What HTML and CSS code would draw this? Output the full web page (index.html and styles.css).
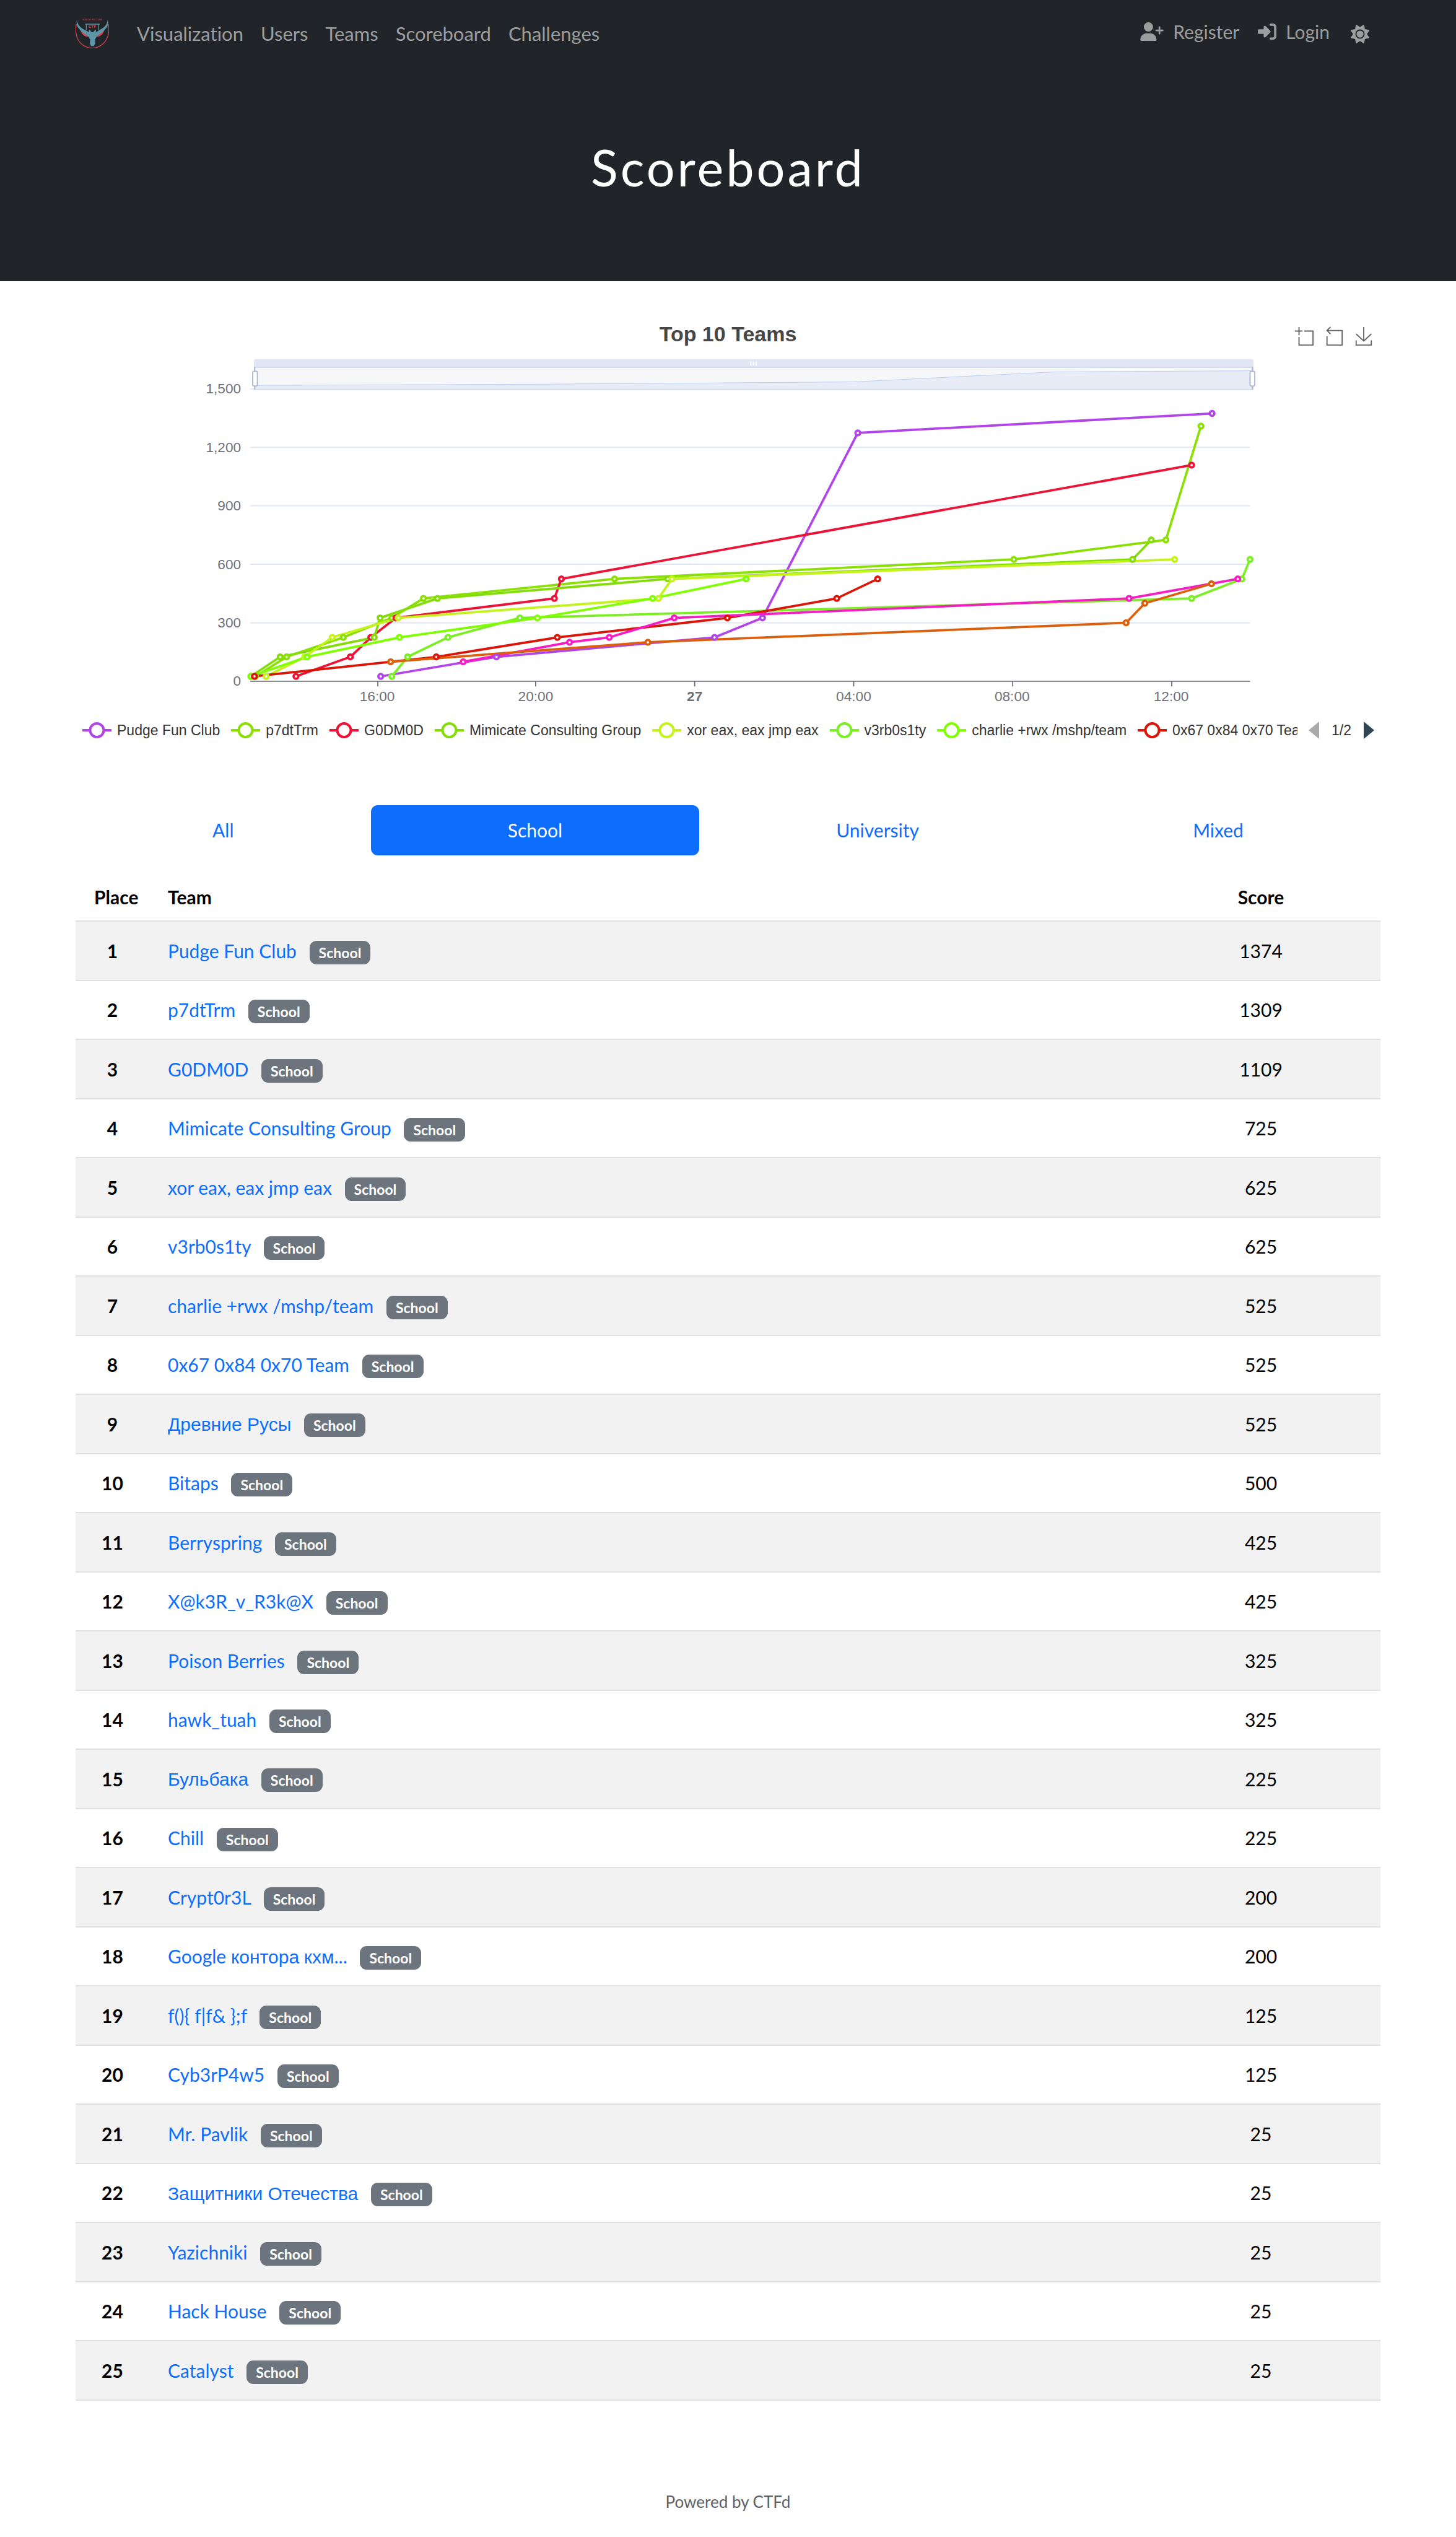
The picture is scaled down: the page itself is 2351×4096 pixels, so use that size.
FILE: index.html
```html
<!DOCTYPE html>
<html lang="en">
<head>
<meta charset="utf-8">
<meta name="viewport" content="width=device-width, initial-scale=1">
<title>Scoreboard</title>
<link rel="stylesheet" href="styles.css">
</head>
<body>
<header class="hero">
  <nav class="navbar container">
    <a class="brand" href="#" aria-label="Home">
      <svg viewBox="27 40 171 151" fill="none">
        <path d="M31 68C24 98 28 142 56 168C90 199 136 197 168 168C197 140 202 98 194 68" stroke="#cf4450" stroke-width="4"/>
        <path d="M48 88L84 112L104 132H86C68 132 54 112 48 88ZM178 88L142 112L124 132H140C158 132 172 112 178 88Z" fill="#d9444f"/>
        <path d="M34 44C34 62 46 80 62 90L96 110L104 122L95 108V97H100L106 106L113 110L120 106L127 97H131V108L124 122L132 108L166 88C182 78 190 62 191 44C196 64 192 78 184 88C172 104 150 118 134 132L126 146L128 166L120 180H106L100 166L102 146L92 132C74 118 54 104 42 88C34 78 30 64 34 44Z" fill="#5b97a9"/>
        <path d="M82 98V68M144 98V68M76 68H150" stroke="#5b97a9" stroke-width="4"/>
        <text x="112" y="88" class="logo-ctf">CTF</text>
        <text x="112" y="49" class="logo-cup">КУБОК РОССИИ</text>
      </svg>
    </a>
    <ul class="nav-links nav-pages">
      <li><a href="#">Visualization</a></li>
      <li><a href="#">Users</a></li>
      <li><a href="#">Teams</a></li>
      <li><a href="#">Scoreboard</a></li>
      <li><a href="#">Challenges</a></li>
    </ul>
    <ul class="nav-links nav-account">
      <li><a href="#"><svg class="icon icon-wide" viewBox="0 0 640 512"><path d="M96 128a128 128 0 1 1 256 0A128 128 0 1 1 96 128zM0 482.3C0 383.8 79.8 304 178.3 304l91.4 0C368.2 304 448 383.8 448 482.3c0 16.4-13.3 29.7-29.7 29.7L29.7 512C13.3 512 0 498.7 0 482.3zM504 312l0-64-64 0c-13.3 0-24-10.7-24-24s10.7-24 24-24l64 0 0-64c0-13.3 10.7-24 24-24s24 10.7 24 24l0 64 64 0c13.3 0 24 10.7 24 24s-10.7 24-24 24l-64 0 0 64c0 13.3-10.7 24-24 24s-24-10.7-24-24z"/></svg>Register</a></li>
      <li><a href="#"><svg class="icon" viewBox="0 0 512 512"><path d="M217.9 105.9L340.7 228.7c7.2 7.2 11.3 17.1 11.3 27.3s-4.1 20.1-11.3 27.3L217.9 406.1c-6.4 6.4-15 9.9-24 9.9c-18.7 0-33.9-15.2-33.9-33.9l0-62.1L32 320c-17.7 0-32-14.3-32-32l0-64c0-17.7 14.3-32 32-32l128 0 0-62.1c0-18.7 15.2-33.9 33.9-33.9c9 0 17.6 3.6 24 9.9zM352 416l64 0c17.7 0 32-14.3 32-32l0-256c0-17.7-14.3-32-32-32l-64 0c-17.7 0-32-14.3-32-32s14.3-32 32-32l64 0c53 0 96 43 96 96l0 256c0 53-43 96-96 96l-64 0c-17.7 0-32-14.3-32-32s14.3-32 32-32z"/></svg>Login</a></li>
      <li><button class="theme-switch" type="button" aria-label="Toggle theme"><svg class="icon" viewBox="0 0 512 512"><path d="M361.5 1.2c5 2.1 8.6 6.6 9.6 11.9L391 121l107.9 19.8c5.3 1 9.8 4.6 11.9 9.6s1.5 10.7-1.6 15.2L446.9 256l62.3 90.3c3.1 4.5 3.7 10.2 1.6 15.2s-6.6 8.6-11.9 9.6L391 391 371.1 498.9c-1 5.3-4.6 9.8-9.6 11.9s-10.7 1.5-15.2-1.6L256 446.9l-90.3 62.3c-4.5 3.1-10.2 3.7-15.2 1.6s-8.6-6.6-9.6-11.9L121 391 13.1 371.1c-5.3-1-9.8-4.6-11.9-9.6s-1.5-10.7 1.6-15.2L65.1 256 2.8 165.7c-3.1-4.5-3.7-10.2-1.6-15.2s6.6-8.6 11.9-9.6L121 121 140.9 13.1c1-5.3 4.6-9.8 9.6-11.9s10.7-1.5 15.2 1.6L256 65.1 346.3 2.8c4.5-3.1 10.2-3.7 15.2-1.6zM160 256a96 96 0 1 1 192 0 96 96 0 1 1 -192 0zm224 0a128 128 0 1 0 -256 0 128 128 0 1 0 256 0z"/></svg></button></li>
    </ul>
  </nav>
  <h1>Scoreboard</h1>
</header>

<main class="container">
  <section class="chart">
    <div class="chart-head">
      <h2>Top 10 Teams</h2>
      <div class="toolbox">
        <button type="button" aria-label="Zoom"><svg viewBox="0 0 34 34"><path d="M1 8H14M8 1V15M17 8H32V32H8V18"/></svg></button>
        <button type="button" aria-label="Zoom reset"><svg viewBox="0 0 34 34"><path d="M11 1L5 7L11 13M5 7H31V32H5V17"/></svg></button>
        <button type="button" aria-label="Save as image"><svg viewBox="0 0 34 34"><path d="M17 1V25M4 13L17 25L30 13M4 24V32H30V24"/></svg></button>
      </div>
    </div>

    <svg class="plot" viewBox="129 609 2232 604" role="img" aria-label="Scores of the top 10 teams over time">
      <g class="grid">
        <path d="M428 665H2138M428 765H2138M428 865H2138M428 965H2138M428 1065H2138"/>
      </g>
      <g class="zoom-slider">
        <path class="slider-bar" d="M434 627V618Q434 614 438 614H2140Q2144 614 2144 618V627Z"/>
        <path class="slider-grip" d="M1284 618V625M1288.500 618V625M1293 618V625"/>
        <rect class="slider-track" x="435" y="628" width="1708" height="38"/>
        <path class="slider-area" d="M435 659L918 657L1460 653L1803 636L2142 634V666H435Z"/>
        <path class="slider-line" d="M435 659L918 657L1460 653L1803 636L2142 634"/>
        <rect class="slider-frame" x="435" y="628" width="1708" height="38"/>
        <path class="slider-handle" d="M435.500 627V666M2142 627V666"/>
        <rect class="slider-handle" x="432" y="635" width="8" height="25" rx="2"/>
        <rect class="slider-handle" x="2138" y="635" width="8" height="25" rx="2"/>
      </g>
      <path class="axis" d="M428 1165H2138M646 1165V1174M916 1165V1174M1188 1165V1174M1460 1165V1174M1732 1165V1174M2004 1165V1174"/>
      <g class="y-labels">
        <text x="412" y="673">1,500</text>
        <text x="412" y="773">1,200</text>
        <text x="412" y="873">900</text>
        <text x="412" y="973">600</text>
        <text x="412" y="1073">300</text>
        <text x="412" y="1173">0</text>
      </g>
      <g class="x-labels">
        <text x="645" y="1199">16:00</text>
        <text x="916" y="1199">20:00</text>
        <text x="1188" y="1199" class="day">27</text>
        <text x="1460" y="1199">04:00</text>
        <text x="1731" y="1199">08:00</text>
        <text x="2003" y="1199">12:00</text>
      </g>
      <g id="lines" class="lines"></g>
      <g id="points" class="points"></g>
    </svg>

    <div class="legend">
      <ul class="legend-items">
        <li class="s1"><svg viewBox="0 0 47 26"><path d="M0 13H47"/><circle cx="23.500" cy="13" r="11"/></svg>Pudge Fun Club</li>
        <li class="s2"><svg viewBox="0 0 47 26"><path d="M0 13H47"/><circle cx="23.500" cy="13" r="11"/></svg>p7dtTrm</li>
        <li class="s3"><svg viewBox="0 0 47 26"><path d="M0 13H47"/><circle cx="23.500" cy="13" r="11"/></svg>G0DM0D</li>
        <li class="s4"><svg viewBox="0 0 47 26"><path d="M0 13H47"/><circle cx="23.500" cy="13" r="11"/></svg>Mimicate Consulting Group</li>
        <li class="s5"><svg viewBox="0 0 47 26"><path d="M0 13H47"/><circle cx="23.500" cy="13" r="11"/></svg>xor eax, eax jmp eax</li>
        <li class="s6"><svg viewBox="0 0 47 26"><path d="M0 13H47"/><circle cx="23.500" cy="13" r="11"/></svg>v3rb0s1ty</li>
        <li class="s7"><svg viewBox="0 0 47 26"><path d="M0 13H47"/><circle cx="23.500" cy="13" r="11"/></svg>charlie +rwx /mshp/team</li>
        <li class="s8"><svg viewBox="0 0 47 26"><path d="M0 13H47"/><circle cx="23.500" cy="13" r="11"/></svg>0x67 0x84 0x70 Team</li>
      </ul>
      <div class="pager">
        <button type="button" aria-label="Previous page"><svg viewBox="0 0 17 28"><path d="M17 0V28L0 14Z" fill="#aaa"/></svg></button>
        <span>1/2</span>
        <button type="button" aria-label="Next page"><svg viewBox="0 0 17 28"><path d="M0 0V28L17 14Z" fill="#2f4554"/></svg></button>
      </div>
    </div>
  </section>

  <div class="brackets">
    <button type="button">All</button>
    <button type="button" class="active">School</button>
    <button type="button">University</button>
    <button type="button">Mixed</button>
  </div>

  <table class="standings">
    <thead>
      <tr><th class="place" scope="col">Place</th><th scope="col">Team</th><th class="score" scope="col">Score</th></tr>
    </thead>
    <tbody>
      <tr><th scope="row">1</th><td><a href="#">Pudge Fun Club</a> <span class="badge">School</span></td><td class="score">1374</td></tr>
      <tr><th scope="row">2</th><td><a href="#">p7dtTrm</a> <span class="badge">School</span></td><td class="score">1309</td></tr>
      <tr><th scope="row">3</th><td><a href="#">G0DM0D</a> <span class="badge">School</span></td><td class="score">1109</td></tr>
      <tr><th scope="row">4</th><td><a href="#">Mimicate Consulting Group</a> <span class="badge">School</span></td><td class="score">725</td></tr>
      <tr><th scope="row">5</th><td><a href="#">xor eax, eax jmp eax</a> <span class="badge">School</span></td><td class="score">625</td></tr>
      <tr><th scope="row">6</th><td><a href="#">v3rb0s1ty</a> <span class="badge">School</span></td><td class="score">625</td></tr>
      <tr><th scope="row">7</th><td><a href="#">charlie +rwx /mshp/team</a> <span class="badge">School</span></td><td class="score">525</td></tr>
      <tr><th scope="row">8</th><td><a href="#">0x67 0x84 0x70 Team</a> <span class="badge">School</span></td><td class="score">525</td></tr>
      <tr><th scope="row">9</th><td><a href="#"><span lang="ru">Древние Русы</span></a> <span class="badge">School</span></td><td class="score">525</td></tr>
      <tr><th scope="row">10</th><td><a href="#">Bitaps</a> <span class="badge">School</span></td><td class="score">500</td></tr>
      <tr><th scope="row">11</th><td><a href="#">Berryspring</a> <span class="badge">School</span></td><td class="score">425</td></tr>
      <tr><th scope="row">12</th><td><a href="#">X@k3R_v_R3k@X</a> <span class="badge">School</span></td><td class="score">425</td></tr>
      <tr><th scope="row">13</th><td><a href="#">Poison Berries</a> <span class="badge">School</span></td><td class="score">325</td></tr>
      <tr><th scope="row">14</th><td><a href="#">hawk_tuah</a> <span class="badge">School</span></td><td class="score">325</td></tr>
      <tr><th scope="row">15</th><td><a href="#"><span lang="ru">Бульбака</span></a> <span class="badge">School</span></td><td class="score">225</td></tr>
      <tr><th scope="row">16</th><td><a href="#">Chill</a> <span class="badge">School</span></td><td class="score">225</td></tr>
      <tr><th scope="row">17</th><td><a href="#">Crypt0r3L</a> <span class="badge">School</span></td><td class="score">200</td></tr>
      <tr><th scope="row">18</th><td><a href="#">Google <span lang="ru">контора</span> <span lang="ru">кхм</span>...</a> <span class="badge">School</span></td><td class="score">200</td></tr>
      <tr><th scope="row">19</th><td><a href="#">f(){ f|f&amp; };f</a> <span class="badge">School</span></td><td class="score">125</td></tr>
      <tr><th scope="row">20</th><td><a href="#">Cyb3rP4w5</a> <span class="badge">School</span></td><td class="score">125</td></tr>
      <tr><th scope="row">21</th><td><a href="#">Mr. Pavlik</a> <span class="badge">School</span></td><td class="score">25</td></tr>
      <tr><th scope="row">22</th><td><a href="#"><span lang="ru">Защитники Отечества</span></a> <span class="badge">School</span></td><td class="score">25</td></tr>
      <tr><th scope="row">23</th><td><a href="#">Yazichniki</a> <span class="badge">School</span></td><td class="score">25</td></tr>
      <tr><th scope="row">24</th><td><a href="#">Hack House</a> <span class="badge">School</span></td><td class="score">25</td></tr>
      <tr><th scope="row">25</th><td><a href="#">Catalyst</a> <span class="badge">School</span></td><td class="score">25</td></tr>
    </tbody>
  </table>
</main>

<footer class="footer"><a href="#">Powered by CTFd</a></footer>
<script src="chart.js"></script>
</body>
</html>
```

FILE: styles.css
```css
* {
  box-sizing: border-box;
}

body {
  margin: 0;
  background: #fff;
  color: #000;
  font-family: Lato, "Liberation Sans", sans-serif;
  font-size: 30px;
  font-variant-ligatures: none;
  line-height: 45px;
}

a {
  color: #0d6efd;
  text-decoration: none;
}

button {
  padding: 0;
  border: 0;
  background: none;
  color: inherit;
  font: inherit;
  cursor: pointer;
}

ul {
  margin: 0;
  padding: 0;
  list-style: none;
}

.container {
  max-width: 2153px;
  margin: 0 auto;
  padding: 0 23px;
}

/* Header */
.hero {
  padding-bottom: 139px;
  background: #212529;
  color: #fff;
}

.navbar {
  display: flex;
  align-items: center;
  padding-top: 15px;
  padding-bottom: 15px;
  color: #9b9d9e;
}

.brand {
  display: flex;
  margin: 15px 31px 15px 0;
}

.brand svg {
  width: 54px;
  height: 48px;
}

.logo-ctf,
.logo-cup {
  fill: #cf4450;
  font-family: "DejaVu Sans", sans-serif;
  text-anchor: middle;
}

.logo-ctf {
  font-size: 19px;
  font-weight: 700;
}

.logo-cup {
  font-size: 12px;
}

.nav-links {
  display: flex;
}

.nav-links a {
  display: flex;
  align-items: center;
  padding: 0 15px;
  color: inherit;
}

.nav-pages a {
  padding: 0 14px;
  font-size: 31px;
}

.nav-account {
  margin: 0 0 6px auto;
}

.icon {
  width: 30px;
  height: 30px;
  margin-right: 15px;
  fill: currentColor;
}

.icon-wide {
  width: 38px;
}

.theme-switch {
  display: flex;
  padding: 11px 3px 4px 19px;
}

.theme-switch .icon {
  margin: 0 15px 0 0;
}

.hero h1 {
  margin: 0;
  padding-top: 116px;
  font-size: 81px;
  font-weight: 400;
  line-height: 91px;
  letter-spacing: 4px;
  text-align: center;
}

/* Chart */
.chart {
  padding-top: 59px;
  font-family: "Liberation Sans", Arial, sans-serif;
}

.chart-head {
  display: grid;
  grid-template-columns: 1fr auto 1fr;
  align-items: center;
  padding-bottom: 10px;
}

.chart-head h2 {
  grid-column: 2;
  margin: 0;
  color: #464646;
  font-size: 34px;
  line-height: 52px;
}

.toolbox {
  display: flex;
  justify-content: flex-end;
  gap: 16px;
  padding: 8px 11px 0 0;
}

.toolbox button {
  display: flex;
}

.toolbox svg {
  width: 32px;
  height: 32px;
  fill: none;
  stroke: #666;
  stroke-width: 2px;
}

.plot {
  display: block;
  width: 100%;
  height: auto;
}

.grid {
  stroke: #e0e6f1;
  stroke-width: 2px;
}

.slider-bar {
  fill: #e0e6f3;
}

.slider-grip {
  stroke: #fff;
  stroke-width: 2px;
}

.slider-track {
  fill: #f6f7f9;
}

.slider-area {
  fill: #e7ecf7;
}

.slider-line {
  fill: none;
  stroke: #b9cdf0;
  stroke-width: 1px;
}

.slider-frame {
  fill: none;
  stroke: #d2dbee;
  stroke-width: 2px;
}

.slider-handle {
  fill: #fff;
  stroke: #acb8d1;
  stroke-width: 2px;
}

.axis {
  stroke: #6e7079;
  stroke-width: 2px;
}

.y-labels,
.x-labels {
  fill: #6e7079;
  font-size: 24px;
  text-anchor: end;
}

.x-labels {
  text-anchor: middle;
}

.day {
  font-weight: 700;
}

.lines {
  fill: none;
  stroke-width: 4px;
  stroke-linejoin: bevel;
}

.points {
  fill: #fff;
  stroke-width: 4px;
}

.s1 { stroke: #b145e9; }
.s2 { stroke: #8ae000; }
.s3 { stroke: #ec1337; }
.s4 { stroke: #84dc0a; }
.s5 { stroke: #c5f31c; }
.s6 { stroke: #7bee25; }
.s7 { stroke: #7fff00; }
.s8 { stroke: #db1507; }
.s9 { stroke: #f71cc4; }
.s10 { stroke: #db5f0c; }

.legend {
  display: flex;
  align-items: center;
  justify-content: space-between;
  margin-top: 20px;
  padding: 0 10px 0 11px;
  color: #333;
  font-size: 23px;
  line-height: 28px;
}

.legend-items {
  display: flex;
  flex: 1;
  gap: 18px;
  overflow: hidden;
}

.legend-items li {
  display: flex;
  flex: none;
  align-items: center;
  gap: 9px;
}

.legend-items svg {
  width: 47px;
  height: 26px;
  fill: #fff;
  stroke-width: 4px;
}

.pager {
  display: flex;
  align-items: center;
  gap: 20px;
  padding-left: 18px;
}

.pager button {
  display: flex;
}

.pager svg {
  width: 17px;
  height: 28px;
}

/* Bracket tabs */
.brackets {
  display: flex;
  margin-top: 107px;
}

.brackets button {
  flex: 1 1 auto;
  padding: 18px 30px;
  border-radius: 11px;
  color: #0d6efd;
}

.brackets .active {
  background: #0d6efd;
  color: #fff;
}

/* Standings */
.standings {
  width: 100%;
  margin-top: 30px;
  border-collapse: separate;
  border-spacing: 0;
  table-layout: fixed;
}

.standings th,
.standings td {
  padding: 0 30px;
  border-bottom: 2px solid #dee2e6;
  text-align: left;
  white-space: nowrap;
}

.standings thead th {
  height: 77px;
}

.standings tbody th {
  padding: 0;
  text-align: center;
}

.standings .place {
  width: 119px;
}

.standings .score {
  width: 386px;
  text-align: center;
}

.standings tbody tr {
  height: 95px;
}

.standings tbody tr:nth-child(odd) {
  height: 96px;
  background: #f2f2f2;
}

.standings [lang="ru"] {
  font-family: "Liberation Sans", Arial, sans-serif;
}

.badge {
  display: inline-block;
  margin-left: 13px;
  padding: 8px 15px;
  border-radius: 11px;
  background: #6c757d;
  color: #fff;
  font-size: 23px;
  font-weight: 700;
  line-height: 22px;
}

/* Footer */
.footer {
  padding: 143px 0 30px;
  font-size: 26px;
  line-height: 40px;
  text-align: center;
}

.footer a {
  color: #5c6166;
}
```

FILE: chart.js
```js
// Each point is [position along the time axis, score].
const series = [
  [[651, 25], [849, 125], [1222, 225], [1304, 325], [1467, 1274], [2073, 1374]],
  [[437, 25], [490, 125], [587, 225], [670, 325], [724, 425], [1051, 525], [1734, 625], [1994, 725], [2054, 1309]],
  [[506, 25], [599, 125], [634, 225], [677, 325], [948, 425], [960, 525], [2038, 1109]],
  [[429, 25], [479, 125], [640, 225], [650, 325], [748, 425], [1142, 525], [1937, 625], [1969, 725]],
  [[455, 25], [521, 125], [568, 225], [681, 325], [1126, 425], [1149, 525], [2009, 625]],
  [[670, 25], [697, 125], [766, 225], [889, 325], [2038, 425], [2124, 525], [2138, 625]],
  [[429, 25], [525, 125], [683, 225], [919, 325], [1116, 425], [1276, 525]],
  [[435, 25], [746, 125], [953, 225], [1244, 325], [1431, 425], [1501, 525]],
  [[792, 100], [974, 200], [1042, 225], [1153, 325], [1931, 425], [2117, 525]],
  [[668, 100], [1108, 200], [1926, 300], [1958, 400], [2072, 500]]
];

const SVG = "http://www.w3.org/2000/svg";
const yOf = score => 1165 - score / 3;

function add(parent, tag, attributes) {
  const node = document.createElementNS(SVG, tag);
  for (const name in attributes) node.setAttribute(name, attributes[name]);
  document.getElementById(parent).appendChild(node);
}

series.forEach((points, i) => {
  const color = "s" + (i + 1);
  add("lines", "polyline", { class: color, points: points.map(([x, s]) => x + "," + yOf(s)).join(" ") });
  points.forEach(([x, s]) => add("points", "circle", { class: color, cx: x, cy: yOf(s), r: 4 }));
});
```
